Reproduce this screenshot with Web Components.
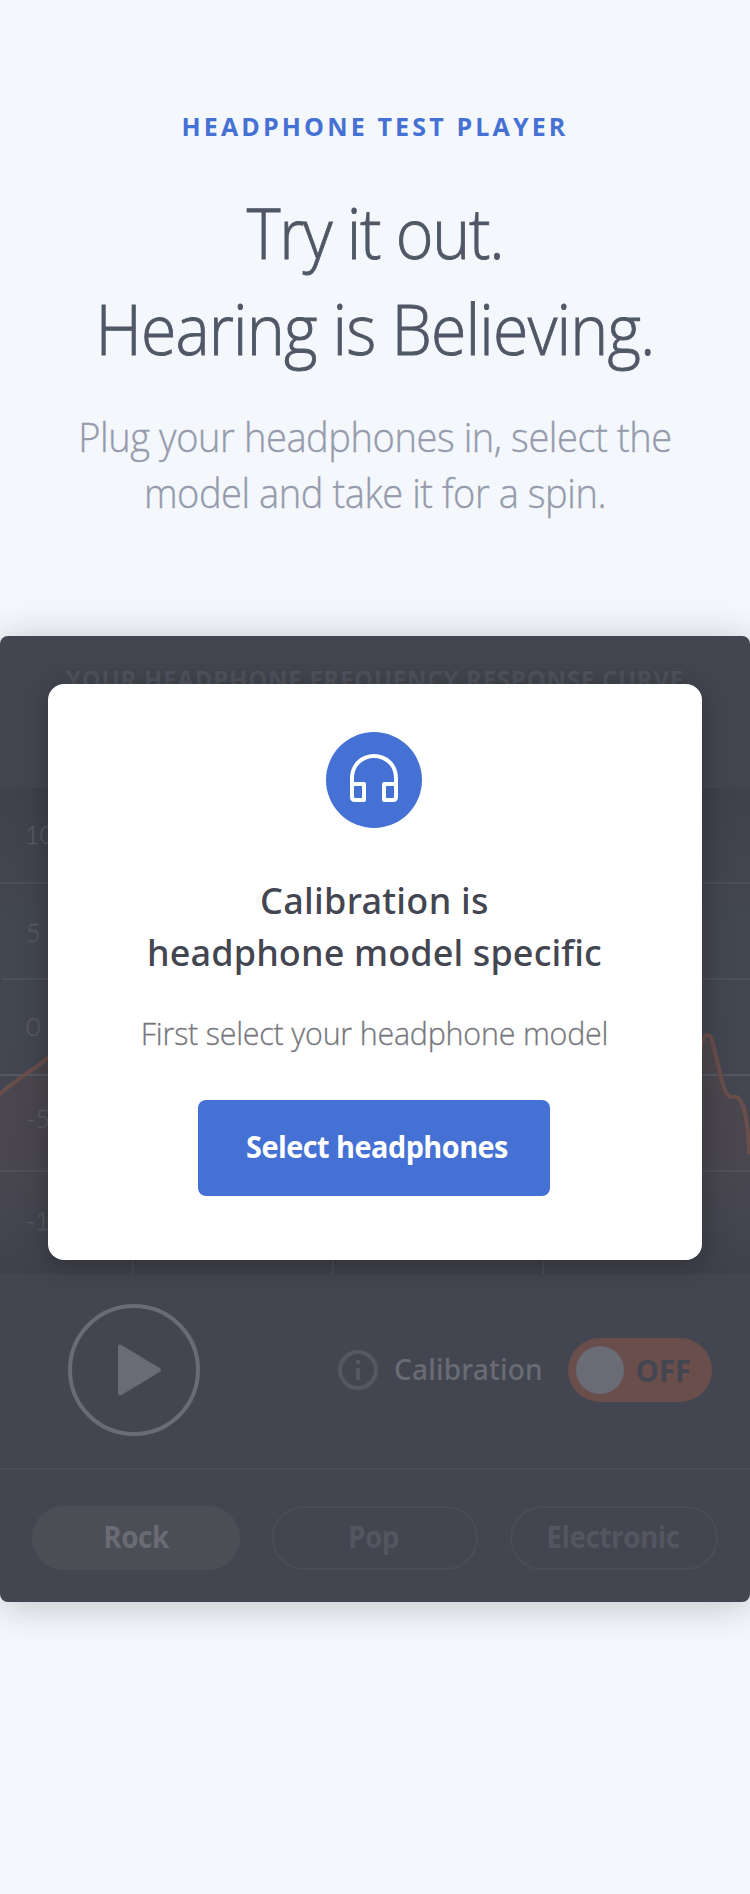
<!DOCTYPE html>
<html lang="en">
<head>
<meta charset="utf-8">
<title>Headphone Test Player</title>
<style>
body { margin: 0; background: #f4f7fc; font-family: "Open Sans", "Noto Sans", sans-serif; }
</style>
</head>
<body>
<test-page>
  <page-intro slot="intro"></page-intro>
  <player-panel slot="player">
    <response-chart slot="chart"></response-chart>
    <play-controls slot="controls"></play-controls>
    <genre-pill slot="genres" active style="--scale:.9;--track:-.46px">Rock</genre-pill>
    <genre-pill slot="genres" style="--scale:.9;--track:-.46px;--nudge:3px">Pop</genre-pill>
    <genre-pill slot="genres" style="--scale:.9;--track:-.56px;--nudge:2px">Electronic</genre-pill>
    <select-dialog slot="dialog"></select-dialog>
  </player-panel>
</test-page>
<script>
const define = (name, html) => customElements.define(name, class extends HTMLElement {
  constructor() {
    super();
    const t = document.createElement('template');
    t.innerHTML = html;
    this.attachShadow({ mode: 'open' }).append(t.content.cloneNode(true));
  }
});

define('test-page', `
<style>
  :host { display: flex; flex-direction: column; gap: 115px; min-height: 1894px; box-sizing: border-box; padding-top: 106px; overflow: hidden; }
</style>
<slot name="intro"></slot><slot name="player"></slot>`);

/* One line of text, horizontally condensed by --scale and tracked by --track. */
define('text-line', `
<style>
  :host { display: block; white-space: nowrap; transform: scaleX(var(--scale, 1)); letter-spacing: var(--track, 0); }
</style><slot></slot>`);

define('page-intro', `
<style>
  :host { display: block; text-align: center; }
  .eyebrow { color: #4571d5; font: 700 25px/40px "Open Sans", sans-serif; letter-spacing: 3.15px; }
  h1 { margin: 38px 0 33px; color: #505766; font: 300 70px/96px "Open Sans", sans-serif; -webkit-text-stroke: .9px #505766; }
  p { margin: 0; color: #959bac; font: 300 40px/56px "Open Sans", sans-serif; -webkit-text-stroke: .35px #959bac; }
</style>
<div class="eyebrow">HEADPHONE TEST PLAYER</div>
<h1>
  <text-line style="--scale:.92;--track:-1.4px">Try it out.</text-line>
  <text-line style="--scale:.92;--track:-.88px">Hearing is Believing.</text-line>
</h1>
<p>
  <text-line style="--scale:.95;--track:-.43px">Plug your headphones in, select the</text-line>
  <text-line style="--scale:.95;--track:-.46px">model and take it for a spin.</text-line>
</p>`);

define('player-panel', `
<style>
  :host { display: block; position: relative; background: #434650; border-radius: 8px; box-shadow: 0 4px 40px rgba(0,0,0,.22); }
  header { height: 152px; box-sizing: border-box; padding-top: 25px; text-align: center; white-space: nowrap;
    color: #50535e; font: 700 24px/36px "Open Sans", sans-serif; letter-spacing: .75px; }
  .genres { display: grid; grid-template-columns: 208px 206px 208px; gap: 32px; padding: 36px 32px 32px; border-top: 2px solid #4a4c57; }
  .dialog { position: absolute; left: 48px; right: 48px; top: 48px; }
</style>
<header>YOUR HEADPHONE FREQUENCY RESPONSE CURVE</header>
<slot name="chart"></slot>
<slot name="controls"></slot>
<div class="genres"><slot name="genres"></slot></div>
<div class="dialog"><slot name="dialog"></slot></div>`);

define('response-chart', `
<style>
  :host { display: block; height: 486px; }
  svg { display: block; }
  text { font: 300 25px Lato, sans-serif; fill: #5a5c66; stroke: #5a5c66; stroke-width: .3px; }
</style>
<svg width="750" height="486" viewBox="0 0 750 486">
  <defs>
    <linearGradient id="bg" x1="0" y1="0" x2="0" y2="1">
      <stop offset="0" stop-color="#3f414b"/><stop offset=".16" stop-color="#42454f"/>
      <stop offset=".3" stop-color="#434751"/><stop offset=".85" stop-color="#434650"/>
      <stop offset="1" stop-color="#3f414b"/>
    </linearGradient>
    <linearGradient id="fill" x1="0" y1="240" x2="0" y2="470" gradientUnits="userSpaceOnUse">
      <stop offset="0" stop-color="#4d484d"/><stop offset=".5" stop-color="#4a464f"/>
      <stop offset="1" stop-color="#4a464f" stop-opacity="0"/>
    </linearGradient>
  </defs>
  <rect width="750" height="486" fill="url(#bg)"/>
  <path d="M0 306 L20 290 Q28 284 36 279 L54 265 L90 240 H690 L701 262 Q705 247 708 247 Q712 247 714 256 L722 290 Q726 308 734 308 C742 306 749 325 750 366 V486 H0Z" fill="url(#fill)"/>
  <g stroke-width="2">
    <path d="M0 95H750M2 191H750M0 383H750" stroke="#fff" stroke-opacity=".05"/>
    <path d="M0 287H750" stroke="#555863"/>
    <path d="M133 0V486M333 0V486M543 0V486" stroke="#484a55"/>
  </g>
  <path d="M-2 307 L20 290 Q28 284 36 279 L54 265 L90 240" fill="none" stroke="#694e4c" stroke-width="4"/>
  <path d="M699 268 C702 252 704 247 707 247 C710 247 712 250 713 256 L721 289 C724 302 727 308 731 309 H736 C742 310 748 326 749 366" fill="none" stroke="#694e4c" stroke-width="4"/>
  <text x="25" y="56">10</text>
  <text x="26" y="154">5 dB</text>
  <text x="26" y="248">0</text>
  <text x="26" y="340">-5</text>
  <text x="26" y="442">-10</text>
</svg>`);

define('play-controls', `
<style>
  :host { display: flex; align-items: center; height: 194px; box-sizing: border-box; padding: 0 38px 2px 68px; }
  svg { display: block; flex: none; }
  .info { margin-left: auto; }
  .label { margin: -2px 0 0 16px; width: 174px; color: #696b75; font: 500 28px/38px "Noto Sans", sans-serif; letter-spacing: .2px; white-space: nowrap; }
  .toggle { display: flex; align-items: center; gap: 10px; width: 144px; height: 64px; box-sizing: border-box; padding-left: 8px;
    border-radius: 32px; background: #694e4c; color: #434650; font: 700 31px/42px "Open Sans", sans-serif; }
  .knob { width: 48px; height: 48px; border-radius: 50%; background: #696c74; }
</style>
<svg width="132" height="132" viewBox="0 0 132 132">
  <circle cx="66" cy="66" r="64" fill="none" stroke="#696b75" stroke-width="4"/>
  <path d="M52 42.5V89.5L91 66Z" fill="#696c74" stroke="#696c74" stroke-width="4" stroke-linejoin="round"/>
</svg>
<svg class="info" width="40" height="40" viewBox="0 0 40 40">
  <circle cx="20" cy="20" r="18" fill="none" stroke="#555863" stroke-width="4"/>
  <path d="M18 10h4v4h-4zM18 18h4v12h-4z" fill="#555863"/>
</svg>
<div class="label">Calibration</div>
<div class="toggle"><span class="knob"></span><text-line style="--scale:.94">OFF</text-line></div>`);

define('genre-pill', `
<style>
  :host { display: block; height: 64px; box-sizing: border-box; border: 2px solid #4b4c57; border-radius: 32px;
    padding-right: var(--nudge, 0); text-align: center; color: #535560; font: 700 31px/57px "Open Sans", sans-serif; }
  :host([active]) { background: #4c4e56; border-color: #4c4e56; color: #696c74; }
</style>
<text-line><slot></slot></text-line>`);

define('select-dialog', `
<style>
  :host { display: flex; flex-direction: column; align-items: center; box-sizing: border-box; height: 576px; padding: 48px 2px 64px 0;
    background: #fff; border-radius: 16px; box-shadow: 0 4px 32px rgba(0,0,0,.28); }
  .badge { width: 96px; height: 96px; border-radius: 50%; background: #4571d5; }
  svg { display: block; }
  h2 { margin: 47px 0 34px; padding-left: 1px; text-align: center; color: #434650; font: 500 36px/52px "Noto Sans", sans-serif; }
  p { margin: 0 0 47px; padding-left: 1px; color: #76777d; font: 300 31px/40px "Open Sans", sans-serif; -webkit-text-stroke: .3px #76777d; }
  button { width: 352px; height: 96px; border: 0; border-radius: 8px; padding: 0 0 4px 6px; background: #4571d5; color: #fff;
    font: 700 31px/42px "Open Sans", sans-serif; }
</style>
<div class="badge">
  <svg width="96" height="96" viewBox="0 0 96 96" fill="none" stroke="#fff" stroke-width="4" stroke-linejoin="round">
    <path d="M26 52V46C26 33 36 24 48 24S70 33 70 46V52"/>
    <path d="M26 52H38V68H29Q26 68 26 65ZM70 52H58V68H67Q70 68 70 65Z"/>
  </svg>
</div>
<h2>
  <text-line style="--track:.27px">Calibration is</text-line>
  <text-line style="--track:.12px">headphone model specific</text-line>
</h2>
<p><text-line style="--scale:.98;--track:-.2px">First select your headphone model</text-line></p>
<button><text-line style="--scale:.93;--track:-.55px">Select headphones</text-line></button>`);
</script>
</body>
</html>
